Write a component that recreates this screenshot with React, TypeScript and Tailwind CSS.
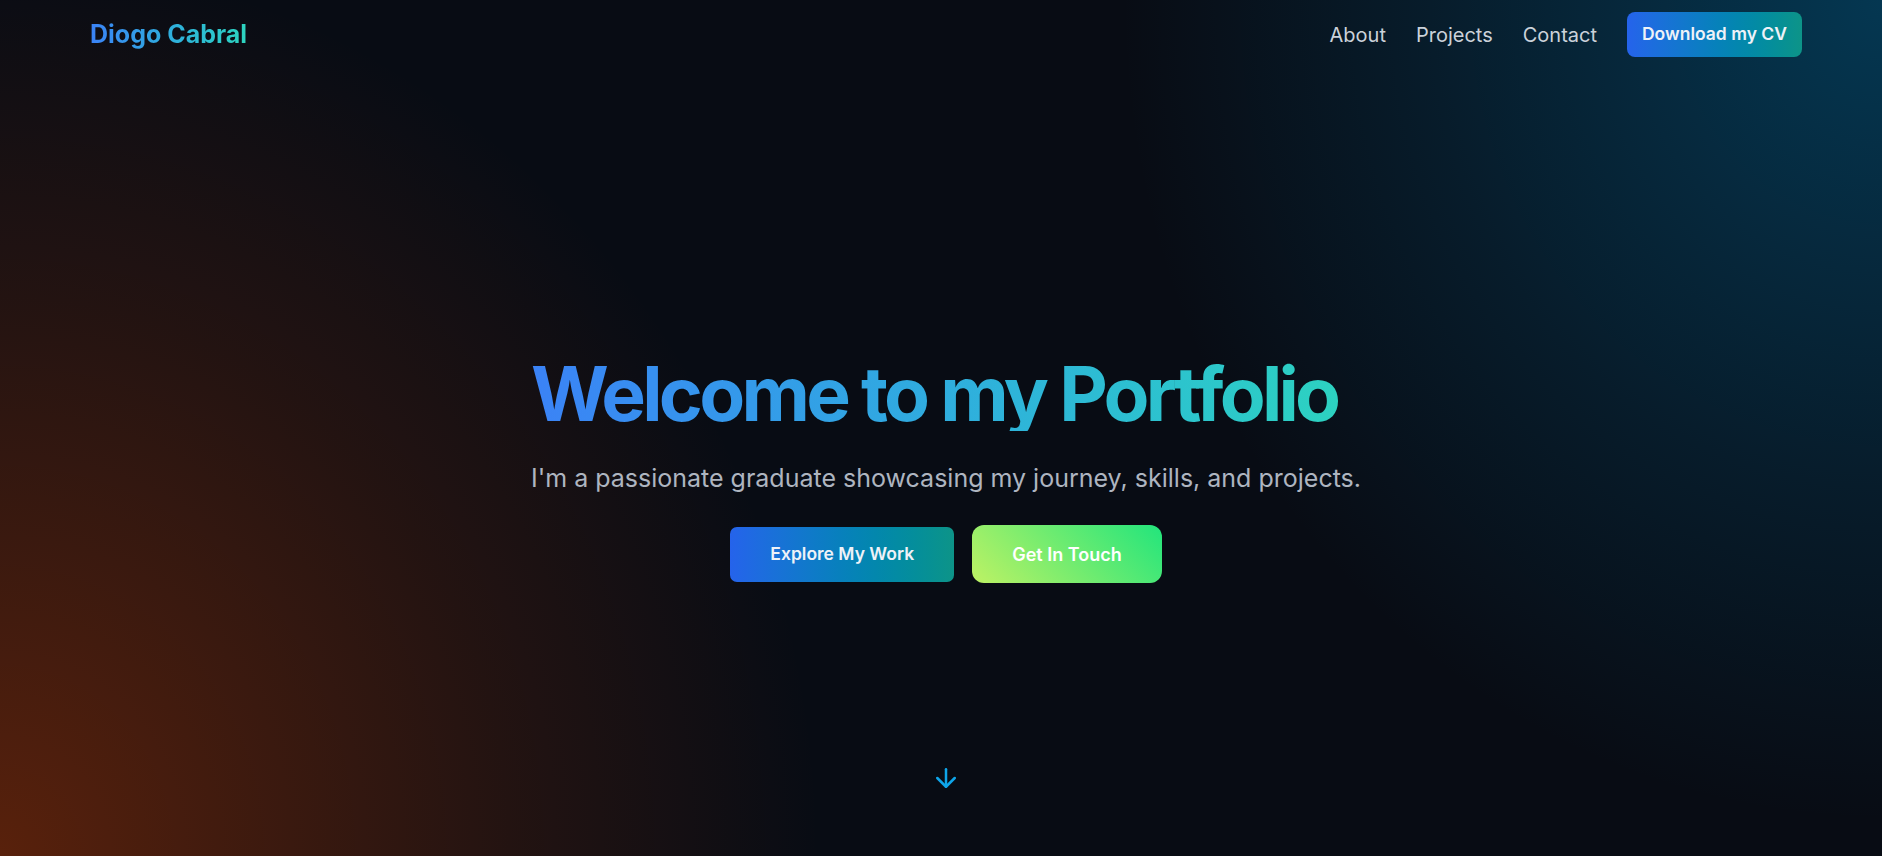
import { ArrowDown } from "lucide-react";

const navLinks = ["About", "Projects", "Contact"];

export default function App() {
  return (
    <div className="relative min-h-[856px] overflow-hidden bg-[#080c14] bg-[radial-gradient(ellipse_760px_820px_at_100%_0%,rgba(0,110,160,0.44),rgba(0,110,160,0.16)_60%,transparent_100%),radial-gradient(ellipse_820px_900px_at_0%_100%,rgba(200,62,0,0.42),rgba(200,62,0,0.14)_62%,transparent_100%)] pl-[10px] [font-family:Inter,'Noto_Sans',sans-serif] text-white">
      {/* Header */}
      <header className="flex items-center justify-between px-[80px] pt-[12px]">
        <a className="bg-gradient-to-r from-[#3b82f6] to-[#2dd4bf] bg-clip-text text-[25px] font-bold leading-[35px] text-transparent">
          Diogo Cabral
        </a>
        <nav className="flex items-center gap-[30px]">
          {navLinks.map((link) => (
            <a key={link} className="text-[20px] leading-[30px] text-[#cbd2da]">
              {link}
            </a>
          ))}
          <button className="h-[45px] rounded-[8px] bg-gradient-to-r from-[#2563eb] to-[#0d9488] px-[15px] text-[17.5px] font-semibold text-[#eef2f8]">
            Download my CV
          </button>
        </nav>
      </header>

      {/* Hero */}
      <main className="flex flex-col items-center">
        <div className="mt-[299px] w-fit">
          <h1 className="bg-gradient-to-r from-[#3b82f6] to-[#2dd4bf] bg-clip-text pr-[6px] text-[75px] font-bold leading-[75px] tracking-[-0.05em] text-transparent">
            Welcome to my Portfolio
          </h1>
          <p className="mt-[30px] text-[25px] leading-[35px] text-[#aeb5c0]">
            I'm a passionate graduate showcasing my journey, skills, and projects.
          </p>
          <div className="mt-[29px] flex items-center justify-center gap-[18px]">
            <button className="h-[55px] rounded-[7px] bg-gradient-to-r from-[#2563eb] to-[#0d9488] px-[40px] text-[17.5px] font-semibold text-[#eef2f8]">
              Explore My Work
            </button>
            <button className="h-[58px] rounded-[12px] bg-[linear-gradient(45deg,#bef264,#22e57c)] px-[40px] text-[18px] font-semibold text-white">
              Get In Touch
            </button>
          </div>
        </div>
        <div className="mt-[180px] flex justify-center">
          <ArrowDown size={30} strokeWidth={2} className="text-[#0ea5e9]" />
        </div>
      </main>
    </div>
  );
}
